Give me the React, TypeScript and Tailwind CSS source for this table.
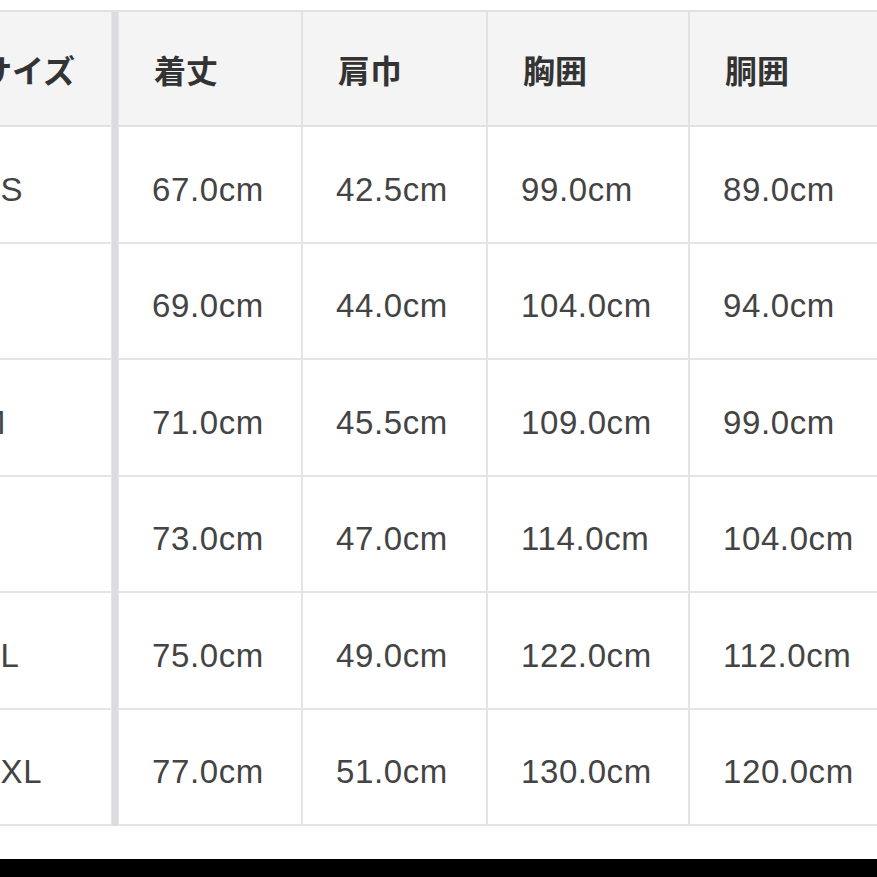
import React from "react";

const headers = ["サイズ", "着丈", "肩巾", "胸囲", "胴囲"];

const rows = [
  ["XS", "67.0cm", "42.5cm", "99.0cm", "89.0cm"],
  ["S", "69.0cm", "44.0cm", "104.0cm", "94.0cm"],
  ["M", "71.0cm", "45.5cm", "109.0cm", "99.0cm"],
  ["L", "73.0cm", "47.0cm", "114.0cm", "104.0cm"],
  ["XL", "75.0cm", "49.0cm", "122.0cm", "112.0cm"],
  ["XXL", "77.0cm", "51.0cm", "130.0cm", "120.0cm"],
];

// column widths incl. right border; col 1 is partly off-screen
const gridCols = "grid grid-cols-[166px_8px_184px_185px_202px_240px]";

function Row({ cells, header, height }: { cells: string[]; header?: boolean; height: string }) {
  const cellBase = header
    ? "flex items-center pl-[35px] pt-[7px] bg-[#f4f4f4] border-b-2 border-[#e2e2e2] text-[32px] font-bold text-[#333]"
    : "flex items-center pl-[33px] pt-[10px] bg-white border-b-2 border-[#e4e4e4] text-[33px] tracking-[0.6px] text-[#444]";
  return (
    <div className={`${gridCols} ${height}`}>
      <div className={`${cellBase} whitespace-nowrap overflow-hidden`}>{cells[0]}</div>
      <div className="bg-[#dcdcde] border-x border-[#e6e6e6]" />
      {cells.slice(1).map((c, i) => (
        <div key={i} className={`${cellBase} border-r-2 whitespace-nowrap`}>
          {c}
        </div>
      ))}
    </div>
  );
}

export default function App() {
  return (
    <div
      className="w-[877px] h-[877px] overflow-hidden bg-white flex flex-col"
      style={{ fontFamily: '"Liberation Sans", Arial, "Noto Sans CJK JP", sans-serif' }}
    >
      <div className="pt-[10px] flex-1">
        <div className="ml-[-55px] border-t-2 border-[#e2e2e2]">
          <Row cells={headers} header height="h-[115px]" />
          {rows.map((r, i) => (
            <Row key={r[0]} cells={r} height={i % 2 === 0 ? "h-[117px]" : "h-[116px]"} />
          ))}
        </div>
      </div>
      <div className="h-[18px] bg-black" />
    </div>
  );
}
